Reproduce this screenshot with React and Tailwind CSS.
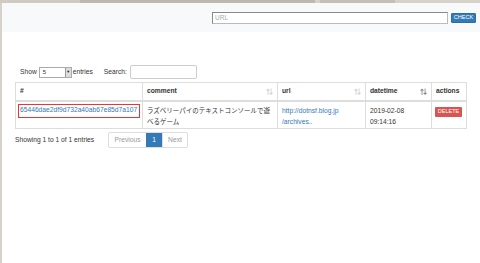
export default function App() {
  const font = { fontFamily: '"Liberation Sans", "Noto Sans CJK JP", Arial, sans-serif' };
  const SortIcon = ({ active }) => (
    <span className={`text-[7px] leading-none ${active ? "text-[#777]" : "text-[#ccc]"}`}>⇅</span>
  );
  return (
    <div className="w-[480px] h-[263px] bg-[#d6d2ca] flex flex-col overflow-hidden" style={font}>
      <div className="h-[3px] shrink-0 flex">
        <div className="w-[80px] bg-[#cfcbc3]" />
        <div className="w-[235px] bg-[#bdb9b1]" />
        <div className="w-[5px]" />
        <div className="w-[75px] bg-[#c4c0b8]" />
      </div>
      <div className="flex-1 flex pl-[2px] pr-[2px]">
        <div className="flex-1 bg-white flex flex-col">
          <div className="h-[29px] bg-[#f8f9fb] flex items-center justify-end pr-[4px] gap-[3px]">
            <div className="w-[236px] h-[12px] bg-white border border-[#bbb] border-t-[#888] border-l-[#888] flex items-center px-[2px] text-[6.5px] text-[#aaa]">
              URL
            </div>
            <div className="w-[25px] h-[10px] bg-[#337ab7] border border-[#2e6da4] flex items-center justify-center text-[5.5px] text-white rounded-[1px]">
              CHECK
            </div>
          </div>
          <div className="px-[13px] pt-[33px]">
            <div className="flex items-center text-[6.7px] text-[#333] h-[14px]">
              <span className="ml-[5px]">Show</span>
              <div className="ml-[2px] w-[33px] h-[11px] border border-[#aaa] bg-white flex items-center justify-between">
                <span className="ml-[3px] text-[6px]">5</span>
                <div className="w-[6px] h-full bg-[#ddd] border-l border-[#999] flex items-center justify-center">
                  <span className="text-[4px] text-[#222]">▼</span>
                </div>
              </div>
              <span className="ml-[1px]">entries</span>
              <span className="ml-[11px]">Search:</span>
              <div className="ml-[3px] w-[67px] h-[14px] border border-[#ccc] rounded-[2px] bg-white" />
            </div>
            <table className="mt-[3px] w-[451px] border-collapse table-fixed text-[6.7px] text-[#333]">
              <colgroup>
                <col className="w-[127px]" />
                <col className="w-[135px]" />
                <col className="w-[88px]" />
                <col className="w-[66px]" />
                <col className="w-[35px]" />
              </colgroup>
              <thead>
                <tr className="h-[18px]">
                  <th className="border border-[#ddd] border-b-2 text-left font-bold px-[4px]">#</th>
                  <th className="border border-[#ddd] border-b-2 text-left font-bold px-[4px]">
                    <div className="flex justify-between items-center"><span>comment</span><SortIcon /></div>
                  </th>
                  <th className="border border-[#ddd] border-b-2 text-left font-bold px-[4px]">
                    <div className="flex justify-between items-center"><span>url</span><SortIcon /></div>
                  </th>
                  <th className="border border-[#ddd] border-b-2 text-left font-bold px-[4px]">
                    <div className="flex justify-between items-center"><span>datetime</span><SortIcon active /></div>
                  </th>
                  <th className="border border-[#ddd] border-b-2 text-left font-bold px-[4px]">actions</th>
                </tr>
              </thead>
              <tbody>
                <tr className="h-[28px]">
                  <td className="border border-[#ddd] align-top px-[2px] pt-[2px]">
                    <div className="border border-[#e33] h-[14px] flex items-center px-[1px] text-[#337ab7] whitespace-nowrap overflow-hidden">
                      65446dae2df9d732a40ab67e85d7a107
                    </div>
                  </td>
                  <td className="border border-[#ddd] align-top pl-[4px] pr-[2px] pt-[3px] leading-[11px] text-[6.5px]">
                    ラズベリーパイのテキストコンソールで遊べるゲーム
                  </td>
                  <td className="border border-[#ddd] align-top px-[4px] pt-[3px] leading-[11px] text-[#337ab7]">
                    http://dotnsf.blog.jp<br />/archives..
                  </td>
                  <td className="border border-[#ddd] align-top px-[4px] pt-[3px] leading-[11px]">
                    2019-02-08<br />09:14:16
                  </td>
                  <td className="border border-[#ddd] align-top px-[3px] pt-[5px]">
                    <div className="w-[27px] h-[10px] bg-[#d9534f] text-white text-[5.5px] flex items-center justify-center rounded-[1px]">
                      DELETE
                    </div>
                  </td>
                </tr>
              </tbody>
            </table>
            <div className="flex items-center mt-[3px] text-[6.7px] text-[#333]">
              <span className="w-[93px]">Showing 1 to 1 of 1 entries</span>
              <div className="flex h-[16px] border border-[#ddd] rounded-[2px] overflow-hidden">
                <div className="w-[37px] flex items-center justify-center text-[#999]">Previous</div>
                <div className="w-[16px] flex items-center justify-center bg-[#337ab7] text-white">1</div>
                <div className="w-[25px] flex items-center justify-center text-[#999] border-l border-[#ddd]">Next</div>
              </div>
            </div>
          </div>
        </div>
      </div>
    </div>
  );
}
